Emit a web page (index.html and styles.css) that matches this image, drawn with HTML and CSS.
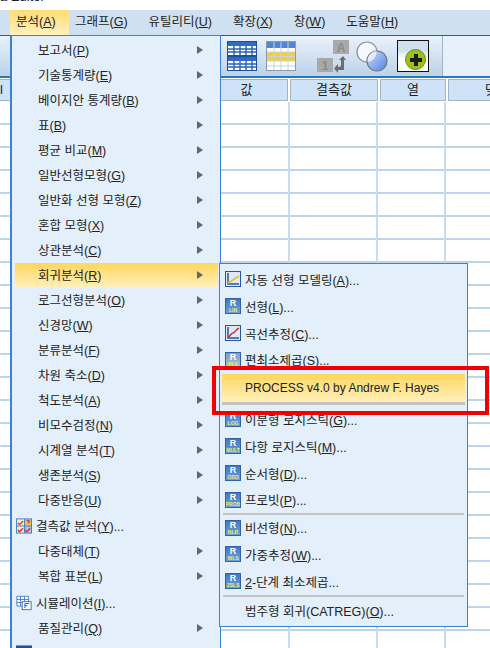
FILE: index.html
```html
<!DOCTYPE html>
<html lang="ko">
<head>
  <meta charset="UTF-8" />
  <title>Data Editor</title>
  <link rel="stylesheet" href="styles.css">
</head>
<body>
  <div class="titlebar"><span>a Editor</span></div>

  <div class="menubar">
    <span class="tab tab-open">분석(<u>A</u>)</span>
    <span class="tab">그래프(<u>G</u>)</span>
    <span class="tab">유틸리티(<u>U</u>)</span>
    <span class="tab">확장(<u>X</u>)</span>
    <span class="tab">창(<u>W</u>)</span>
    <span class="tab">도움말(<u>H</u>)</span>
  </div>

  <div class="toolbar">
    <div class="tools">
      <svg class="tool" width="30" height="30" viewBox="0 0 30 30">
        <rect x="0.5" y="0.5" width="29" height="14" fill="#fff" stroke="#1f4f9c"/>
        <rect x="1" y="1" width="28" height="4" fill="#2f6cc4"/>
        <path d="M1 8h28M1 11h28M7 5v9M13 5v9M19 5v9M25 5v9" stroke="#2a62b8" stroke-width="1.4"/>
        <rect x="0.5" y="15.5" width="29" height="14" fill="#fff" stroke="#1f4f9c"/>
        <rect x="1" y="16" width="28" height="4" fill="#2f6cc4"/>
        <path d="M1 23h28M1 26h28M7 20v9M13 20v9M19 20v9M25 20v9" stroke="#2a62b8" stroke-width="1.4"/>
      </svg>
      <svg class="tool tool-table" width="30" height="30" viewBox="0 0 30 30">
        <rect x="0.5" y="0.5" width="29" height="29" fill="#fff" stroke="#8a9bb0"/>
        <rect x="1" y="1" width="28" height="6" fill="#4f86d6"/>
        <rect x="1" y="11" width="28" height="9" fill="#f7cf2e"/>
        <path d="M1 11h28M1 15.500h28M1 20h28M1 25h28M8 1v28M15 1v28M22 1v28" stroke="#c9d3dd" stroke-width="1"/>
      </svg>
      <svg class="tool tool-cases" width="33" height="33" viewBox="0 0 33 33">
        <rect x="16" y="0" width="16" height="14" fill="#a9a9a9"/>
        <text x="24" y="11.500" class="tool-letter">A</text>
        <rect x="0" y="18" width="16" height="14" fill="#a9a9a9"/>
        <text x="8" y="29.500" class="tool-letter">1</text>
        <path d="M26 16l-4 4h2v5c0 1-1 2-2 2h-1v-3l-4 4.500 4 4.500v-3h6v-10h2z" fill="#6d6d6d"/>
      </svg>
      <svg class="tool tool-venn" width="32" height="31" viewBox="0 0 32 31">
        <defs>
          <linearGradient id="venn" x1="0" y1="0" x2="1" y2="1">
            <stop offset="0" stop-color="#cfe0fb"/>
            <stop offset="1" stop-color="#4f82e0"/>
          </linearGradient>
        </defs>
        <circle cx="11" cy="11" r="10" fill="#f5f8fc" stroke="#8a8f99" stroke-width="1.2"/>
        <circle cx="21" cy="20" r="10" fill="url(#venn)" stroke="#6b7380" stroke-width="1.2"/>
        <path d="M11.500 21a10 10 0 0 1 9-11a10 10 0 0 1-9 11z" fill="#e4ecf8"/>
      </svg>
      <div class="tool-plus">
        <span class="plus-dot">
          <svg width="12" height="12" viewBox="0 0 12 12"><path d="M4 0h4v4h4v4h-4v4h-4v-4h-4v-4h4z" fill="#1c1c1c"/></svg>
        </span>
      </div>
    </div>
  </div>

  <div class="sheet-head">
    <div class="head-cell head-stub">l</div>
    <div class="head-cell head-value">값</div>
    <div class="head-cell head-missing">결측값</div>
    <div class="head-cell head-cols">열</div>
    <div class="head-cell head-align">맞춤</div>
  </div>
  <div class="sheet">
    <div class="col col-stub"></div>
    <div class="col col-value"></div>
    <div class="col col-missing"></div>
    <div class="col col-cols"></div>
  </div>

  <!-- analyse menu -->
  <div class="menu">
    <div class="item has-sub"><span>보고서(<u>P</u>)</span></div>
    <div class="item has-sub"><span>기술통계량(<u>E</u>)</span></div>
    <div class="item has-sub"><span>베이지안 통계량(<u>B</u>)</span></div>
    <div class="item has-sub"><span>표(<u>B</u>)</span></div>
    <div class="item has-sub"><span>평균 비교(<u>M</u>)</span></div>
    <div class="item has-sub"><span>일반선형모형(<u>G</u>)</span></div>
    <div class="item has-sub"><span>일반화 선형 모형(<u>Z</u>)</span></div>
    <div class="item has-sub"><span>혼합 모형(<u>X</u>)</span></div>
    <div class="item has-sub"><span>상관분석(<u>C</u>)</span></div>
    <div class="item has-sub item-on"><span>회귀분석(<u>R</u>)</span></div>
    <div class="item has-sub"><span>로그선형분석(<u>O</u>)</span></div>
    <div class="item has-sub"><span>신경망(<u>W</u>)</span></div>
    <div class="item has-sub"><span>분류분석(<u>F</u>)</span></div>
    <div class="item has-sub"><span>차원 축소(<u>D</u>)</span></div>
    <div class="item has-sub"><span>척도분석(<u>A</u>)</span></div>
    <div class="item has-sub"><span>비모수검정(<u>N</u>)</span></div>
    <div class="item has-sub"><span>시계열 분석(<u>T</u>)</span></div>
    <div class="item has-sub"><span>생존분석(<u>S</u>)</span></div>
    <div class="item has-sub"><span>다중반응(<u>U</u>)</span></div>
    <div class="item item-icon gap-1">
      <svg width="16" height="16" viewBox="0 0 18 17">
        <rect width="18" height="17" fill="#3f78c4"/>
        <rect x="1" y="1" width="8" height="7" fill="#f3e9c8"/>
        <rect x="1" y="9" width="8" height="7" fill="#f3e9c8"/>
        <rect x="10" y="1" width="7" height="7" fill="#e7c83a"/>
        <rect x="10" y="9" width="7" height="7" fill="#a9c4e8"/>
        <path d="M2 5l2 2 4-4M2 13l2 2 4-4M10 13l2 2 4-4" fill="none" stroke="#d0342c" stroke-width="1.5"/>
        <path d="M12 3c1-1.500 3-1 3 .3 0 1-1.300 1-1.300 2.200" fill="none" stroke="#a3359a" stroke-width="1.3"/>
      </svg>
      <span>결측값 분석(<u>Y</u>)...</span>
    </div>
    <div class="item has-sub"><span>다중대체(<u>T</u>)</span></div>
    <div class="item has-sub"><span>복합 표본(<u>L</u>)</span></div>
    <div class="item item-icon gap-2">
      <svg width="16" height="16" viewBox="0 0 18 17">
        <path d="M1 1h13v11h-13zM1 4.500h13M1 8h13M5 1v11M9.500 1v11" fill="#fff" stroke="#3f78c4"/>
        <rect x="7" y="7" width="10" height="9" fill="#fff" stroke="#2f6cc4"/>
        <path d="M10 9h5M10 9v5M10 11.500h3" fill="none" stroke="#2f6cc4" stroke-width="1.200"/>
      </svg>
      <span>시뮬레이션(<u>I</u>)...</span>
    </div>
    <div class="item has-sub"><span>품질관리(<u>Q</u>)</span></div>
    <div class="item item-icon">
      <svg width="16" height="16" viewBox="0 0 18 17"><rect width="18" height="17" fill="#274f96"/></svg>
    </div>
  </div>

  <!-- regression submenu -->
  <div class="submenu">
    <div class="sub-item">
      <svg class="sub-icon" width="16" height="16" viewBox="0 0 16 16">
        <rect x="0.500" y="0.500" width="15" height="15" fill="#dfeaf8" stroke="#27579f"/>
        <path d="M3 2v11h11" fill="none" stroke="#27579f" stroke-width="1.500"/>
        <path d="M3 12l11-7" stroke="#e8c62a" stroke-width="2"/>
      </svg>
      <span>자동 선형 모델링(<u>A</u>)...</span>
    </div>
    <div class="sub-item"><span class="ricon"><b>R</b><i>LIN</i></span><span>선형(<u>L</u>)...</span></div>
    <div class="sub-item">
      <svg class="sub-icon" width="16" height="16" viewBox="0 0 16 16">
        <rect x="0.500" y="0.500" width="15" height="15" fill="#dfeaf8" stroke="#27579f"/>
        <path d="M3 2v11h11" fill="none" stroke="#27579f" stroke-width="1.500"/>
        <path d="M3 12c3-1 3-4 5-4s2-3 6-5" fill="none" stroke="#d0342c" stroke-width="1.500"/>
      </svg>
      <span>곡선추정(<u>C</u>)...</span>
    </div>
    <div class="sub-item sub-short"><span class="ricon ricon-pale"><b>R</b><i>PLS</i></span><span>편최소제곱(<u>S</u>)...</span></div>
    <div class="sub-item sub-on"><span>PROCESS v4.0 by Andrew F. Hayes</span></div>
    <div class="sub-item"><span class="ricon"><b>R</b><i>LOG</i></span><span>이분형 로지스틱(<u>G</u>)...</span></div>
    <div class="sub-item"><span class="ricon"><b>R</b><i>MULT</i></span><span>다항 로지스틱(<u>M</u>)...</span></div>
    <div class="sub-item"><span class="ricon"><b>R</b><i>ORD</i></span><span>순서형(<u>D</u>)...</span></div>
    <div class="sub-item sub-short"><span class="ricon"><b>R</b><i>PROB</i></span><span>프로빗(<u>P</u>)...</span></div>
    <div class="sep"></div>
    <div class="sub-item sub-short"><span class="ricon"><b>R</b><i>NLR</i></span><span>비선형(<u>N</u>)...</span></div>
    <div class="sub-item"><span class="ricon"><b>R</b><i>WLS</i></span><span>가중추정(<u>W</u>)...</span></div>
    <div class="sub-item"><span class="ricon"><b>R</b><i>2SLS</i></span><span><u>2</u>-단계 최소제곱...</span></div>
    <div class="sep"></div>
    <div class="sub-item"><span>범주형 회귀(CATREG)(<u>O</u>)...</span></div>
  </div>

  <div class="callout"></div>
</body>
</html>
```

FILE: styles.css
```css
* {
  box-sizing: border-box;
}

body {
  margin: 0;
  width: 490px;
  height: 648px;
  overflow: hidden;
  position: relative;
  background: #fff;
  color: #222;
  font-family: "Liberation Sans", "Noto Sans CJK KR", sans-serif;
  font-size: 12px;
}

u {
  text-underline-offset: 1px;
}

.titlebar {
  height: 10px;
  overflow: hidden;
  background: #fff;
  font-size: 13px;
  line-height: 13px;
}

.titlebar span {
  display: block;
  margin-top: -10px;
}

/* menu bar */
.menubar {
  display: flex;
  height: 25px;
  padding-left: 10px;
  background: #cfe0f1;
  font-size: 12.5px;
  line-height: 24px;
}

.tab {
  padding: 0 10.5px;
}

.tab-open {
  width: 59px;
  margin-right: -4.500px;
  padding: 0 0 0 6px;
  background: linear-gradient(#ffdc74, #fff0bd);
}

/* toolbar */
.toolbar {
  height: 43px;
  background: #e6f1fb;
  border-top: 1px solid #555;
  border-bottom: 2px solid #2a78c4;
}

.tools {
  display: flex;
  align-items: center;
  width: 443px;
  height: 40px;
  padding-left: 227px;
  background: linear-gradient(#eaf2fb, #bcd2e8);
  border-right: 1px solid #9fb2c6;
}

.tool-table {
  margin-left: 9px;
}

.tool-cases {
  margin-left: 21px;
}

.tool-venn {
  margin-left: 6px;
}

.tool-letter {
  font-family: "Liberation Sans", sans-serif;
  font-size: 12px;
  font-weight: bold;
  fill: #8a8a8a;
  text-anchor: middle;
}

.tool-plus {
  display: flex;
  align-items: flex-end;
  justify-content: flex-end;
  width: 32px;
  height: 32px;
  margin-left: 9px;
  padding: 0 2px 1px 0;
  background: linear-gradient(#cfe0f1 0 30%, #fff 60%);
  border: 1px solid #111;
}

.plus-dot {
  display: flex;
  align-items: center;
  justify-content: center;
  width: 21px;
  height: 21px;
  border-radius: 50%;
  background: #9cbf1e;
  border: 1px solid #6b8a10;
}

/* data sheet */
.sheet-head {
  display: flex;
  height: 24px;
  padding-top: 1px;
  background: #fff;
  overflow: hidden;
}

.head-cell {
  flex: none;
  height: 22px;
  margin-right: 2px;
  background: #cfe3f8;
  border: 1px solid #a5b3c2;
  text-align: center;
  font-size: 13px;
  line-height: 20px;
}

.head-stub {
  width: 203px;
  padding-left: 0;
  text-align: left;
  border-left: 0;
}

.head-value {
  width: 83px;
}

.head-missing {
  width: 88px;
}

.head-cols {
  width: 66px;
}

.head-align {
  width: 98px;
}

.sheet {
  display: flex;
  height: 546px;
  /* first line sits at y=125, rows are 23px */
  background: repeating-linear-gradient(#fff 0 21px, #bcd4ec 21px 23px);
}

.col {
  flex: none;
  border-right: 2px solid #c8dcf0;
}

.col-stub {
  width: 205px;
}

.col-value {
  width: 85px;
}

.col-missing {
  width: 88px;
}

.col-cols {
  width: 68px;
}

/* dropdown menus */
.menu {
  position: absolute;
  left: 10px;
  top: 35px;
  width: 211px;
  height: 620px;
  padding: 1.500px 2px 0 3px;
  background: #e3effb;
  border: 1px solid #3c82cc;
  border-left-width: 2px;
}

.item {
  position: relative;
  display: flex;
  align-items: center;
  height: 25px;
  padding: 0 0 1px 23px;
  font-size: 12.5px;
}

.has-sub::after {
  content: "";
  position: absolute;
  right: 15px;
  top: 8px;
  border-left: 6px solid #666;
  border-top: 4.500px solid transparent;
  border-bottom: 4.500px solid transparent;
}

.item-on {
  background: linear-gradient(#ffd75e, #fff0bd);
}

.item-icon {
  gap: 4px;
  padding-left: 1px;
}

.gap-1 {
  margin-top: 1px;
}

.gap-2 {
  margin-top: 2px;
}

.submenu {
  position: absolute;
  left: 219px;
  top: 263px;
  width: 249px;
  height: 364px;
  padding: 2px 2px 0 2px;
  background: #e3effb;
  border: 1px solid #3c82cc;
}

.sub-item {
  display: flex;
  align-items: center;
  height: 27px;
  padding: 0 0 1px 23px;
  font-size: 12.5px;
}

.sub-short {
  height: 26px;
}

.sub-icon,
.ricon {
  flex: none;
  margin-left: -20px;
  margin-right: 4px;
}

.sub-on {
  height: 31px;
  margin: 1px 0;
  padding-bottom: 0;
  background: linear-gradient(#ffd75e, #fff0bd);
  border-bottom: 3px solid #c2c2c2;
  font-size: 12px;
}

.ricon {
  display: flex;
  flex-direction: column;
  align-items: center;
  width: 16px;
  height: 16px;
  overflow: hidden;
  background: linear-gradient(#3e78c6, #6fa0dc);
  border: 1px solid #2f62a8;
  color: #fff;
  font-family: "Liberation Sans", sans-serif;
}

.ricon b {
  font-size: 9px;
  line-height: 9px;
}

.ricon i {
  font-size: 5px;
  font-style: normal;
  font-weight: bold;
  line-height: 5px;
  color: #e6ef5a;
}

.ricon-pale {
  background: linear-gradient(#7f9fc8, #a6c0dc);
}

.sep {
  height: 2px;
  margin: 0 1px;
  background: #c4c4c4;
}

/* red box drawn over the screenshot */
.callout {
  position: absolute;
  left: 212px;
  top: 366px;
  width: 277px;
  height: 49px;
  border: 4px solid #f00000;
}
```
